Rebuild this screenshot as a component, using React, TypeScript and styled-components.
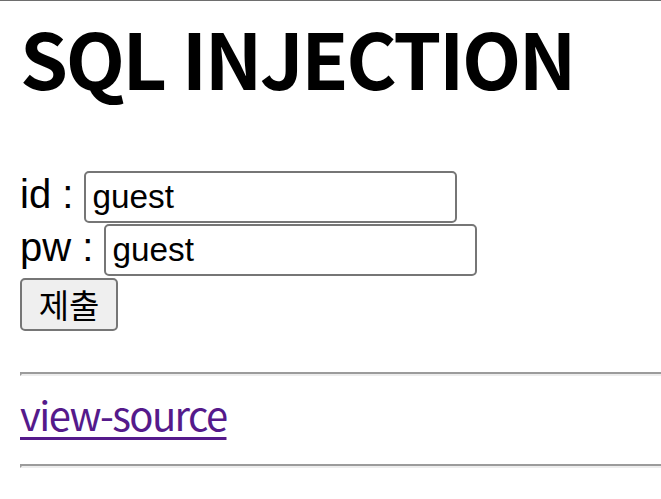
import React from "react";
import styled, { createGlobalStyle } from "styled-components";

const Global = createGlobalStyle`
  html, body { margin: 0; padding: 0; background: #fff; overflow: hidden; }
  body { font-family: "Liberation Sans", Arial, sans-serif; color: #000; }
`;

const Page = styled.div`
  border-top: 1px solid #6e6e6e;
  padding: 0 0 0 20px;
  margin-right: -12px;
`;

const Title = styled.h1`
  margin: 17px 0 0;
  font-family: "Noto Sans CJK KR", "Noto Sans", sans-serif;
  font-weight: 700;
  font-size: 77px;
  line-height: 78px;
  letter-spacing: -2.4px;
  word-spacing: 2px;
`;

const Form = styled.form`
  margin: 75px 0 0;
  display: flex;
  flex-direction: column;
  align-items: flex-start;
`;

const Row = styled.div`
  display: flex;
  align-items: baseline;
  margin-bottom: 1px;
`;

const Label = styled.label`
  font-family: "Liberation Sans", Arial, sans-serif;
  font-size: 40px;
  white-space: pre;
`;

const Input = styled.input`
  box-sizing: border-box;
  width: 373px;
  height: 52px;
  border: 2px solid #767676;
  border-radius: 5px;
  padding: 3px 6px;
  font-family: "Liberation Sans", Arial, sans-serif;
  font-size: 33.3px;
  color: #000;
  background: #fff;
  outline: none;
`;

const Submit = styled.button`
  box-sizing: border-box;
  margin-top: 1px;
  width: 98px;
  height: 53px;
  border: 2px solid #767676;
  border-radius: 5px;
  background: #efefef;
  font-family: "Noto Sans CJK KR", "Liberation Sans", sans-serif;
  font-size: 33px;
  color: #000;
  padding: 0 0 4px;
`;

const Rule = styled.hr<{ $top: number; $bottom: number }>`
  box-sizing: border-box;
  height: 4px;
  margin: ${(p) => `${p.$top}px 0 ${p.$bottom}px`};
  border-top: 2px solid #9b9b9b;
  border-left: 2px solid #9b9b9b;
  border-bottom: 2px solid #ededed;
  border-right: 2px solid #ededed;
`;

const SourceLink = styled.a`
  display: inline-block;
  font-family: "Noto Sans CJK KR", "Noto Sans", sans-serif;
  font-size: 40px;
  line-height: 48px;
  letter-spacing: -1.6px;
  color: #551a8b;
  text-decoration: underline;
  text-decoration-thickness: 3px;
  text-underline-offset: 6px;
`;

export default function App() {
  return (
    <Page>
      <Global />
      <Title>SQL INJECTION</Title>
      <Form onSubmit={(e) => e.preventDefault()}>
        <Row>
          <Label>id : </Label>
          <Input defaultValue="guest" />
        </Row>
        <Row>
          <Label>pw : </Label>
          <Input defaultValue="guest" />
        </Row>
        <Submit type="submit">제출</Submit>
      </Form>
      <Rule $top={41} $bottom={14} />
      <SourceLink href="#">view-source</SourceLink>
      <Rule $top={26} $bottom={0} />
    </Page>
  );
}
